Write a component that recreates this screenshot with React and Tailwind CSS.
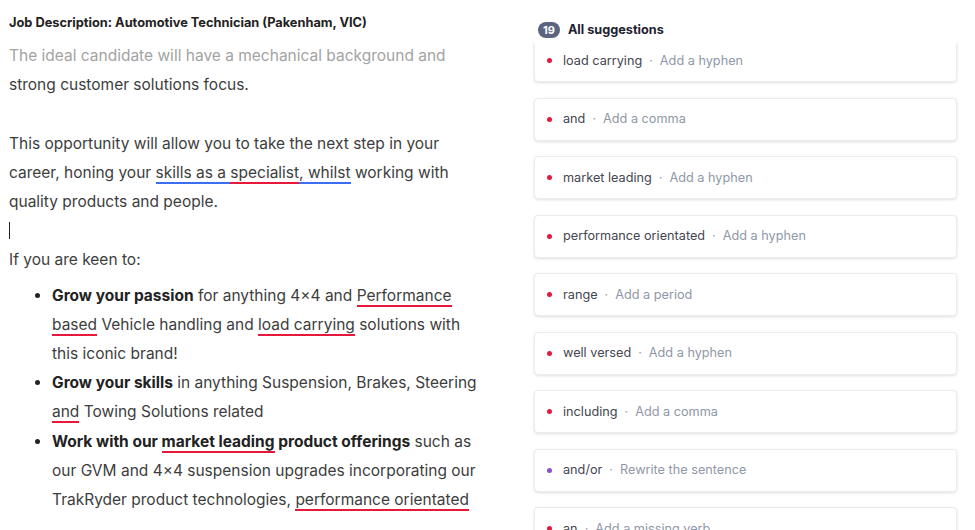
import React from "react";

const red = "border-b-2 border-[#e8173c]";
const blue = "border-b-2 border-[#3b6ef0]";

const suggestions = [
    { word: "load carrying", hint: "Add a hyphen", dot: "bg-[#e8173c]" },
    { word: "and", hint: "Add a comma", dot: "bg-[#e8173c]" },
    { word: "market leading", hint: "Add a hyphen", dot: "bg-[#e8173c]" },
    { word: "performance orientated", hint: "Add a hyphen", dot: "bg-[#e8173c]" },
    { word: "range", hint: "Add a period", dot: "bg-[#e8173c]" },
    { word: "well versed", hint: "Add a hyphen", dot: "bg-[#e8173c]" },
    { word: "including", hint: "Add a comma", dot: "bg-[#e8173c]" },
    { word: "and/or", hint: "Rewrite the sentence", dot: "bg-[#8a4fd6]" },
    { word: "an", hint: "Add a missing verb", dot: "bg-[#e8173c]" },
];

function Card({ s, first }) {
    return (
        <div className={"flex items-center h-[43px] shrink-0 rounded-[4px] bg-white border border-[#ececf0] shadow-[0_1px_3px_rgba(0,0,0,0.12)] pl-[12px] text-[12.7px] " + (first ? "-mt-[5px]" : "")}>
            <span className={"w-[5px] h-[5px] rounded-full " + s.dot} />
            <span className="ml-[11px] text-[#444650]">{s.word}</span>
            <span className="mx-[7px] text-[#9aa0ae]">·</span>
            <span className="text-[#9097a8]">{s.hint}</span>
        </div>
    );
}

export default function App() {
    return (
        <div className="flex w-[975px] h-[530px] overflow-hidden bg-white font-['Inter',sans-serif]">
            <div className="w-[520px] shrink-0 pl-[9px] pt-[15px]">
                <h1 className="text-[12.8px] font-bold text-[#222] leading-[16px]">Job Description: Automotive Technician (Pakenham, VIC)</h1>
                <div className="w-[474px] text-[15.5px] leading-[29.2px] text-[#3d3d3d] mt-[10px]">
                    <p className="first-line:text-[#a3a3a3]">The ideal candidate will have a mechanical background and strong customer solutions focus.</p>
                    <p className="h-[29.2px]" />
                    <p>This opportunity will allow you to take the next step in your career, honing your <span className={blue}>skills as a </span><span className={red}>specialist</span><span className={blue}>, whilst</span> working with quality products and people.</p>
                    <p className="h-[29.2px] flex items-center"><span className="w-px h-[17px] bg-[#222]" /></p>
                    <p>If you are keen to:</p>
                    <ul className="list-disc pl-[43px] mt-[6px] marker:text-[#222]">
                        <li><b className="font-bold text-[#222]">Grow your passion</b> for anything 4×4 and <span className={red}>Performance based</span> Vehicle handling and <span className={red}>load carrying</span> solutions with this iconic brand!</li>
                        <li><b className="font-bold text-[#222]">Grow your skills</b> in anything Suspension, Brakes, Steering <span className={red}>and</span> Towing Solutions related</li>
                        <li><b className="font-bold text-[#222]">Work with our <span className={red}>market leading</span> product offerings</b> such as our GVM and 4×4 suspension upgrades incorporating our TrakRyder product technologies, <span className={red}>performance orientated</span></li>
                    </ul>
                </div>
            </div>
            <div className="flex-1 flex flex-col pl-[14px] pr-[18px]">
                <div className="relative z-10 bg-white h-[44px] shrink-0 flex items-center pt-[15px] pl-[4px]">
                    <span className="h-[16px] px-[5px] rounded-full bg-[#5c6580] text-white text-[11px] font-bold leading-[16px]">19</span>
                    <span className="ml-[8px] text-[12.7px] font-bold text-[#1f2230]">All suggestions</span>
                </div>
                <div className="flex flex-col gap-[15.5px]">
                    {suggestions.map((s, i) => <Card key={i} s={s} first={i === 0} />)}
                </div>
            </div>
        </div>
    );
}
